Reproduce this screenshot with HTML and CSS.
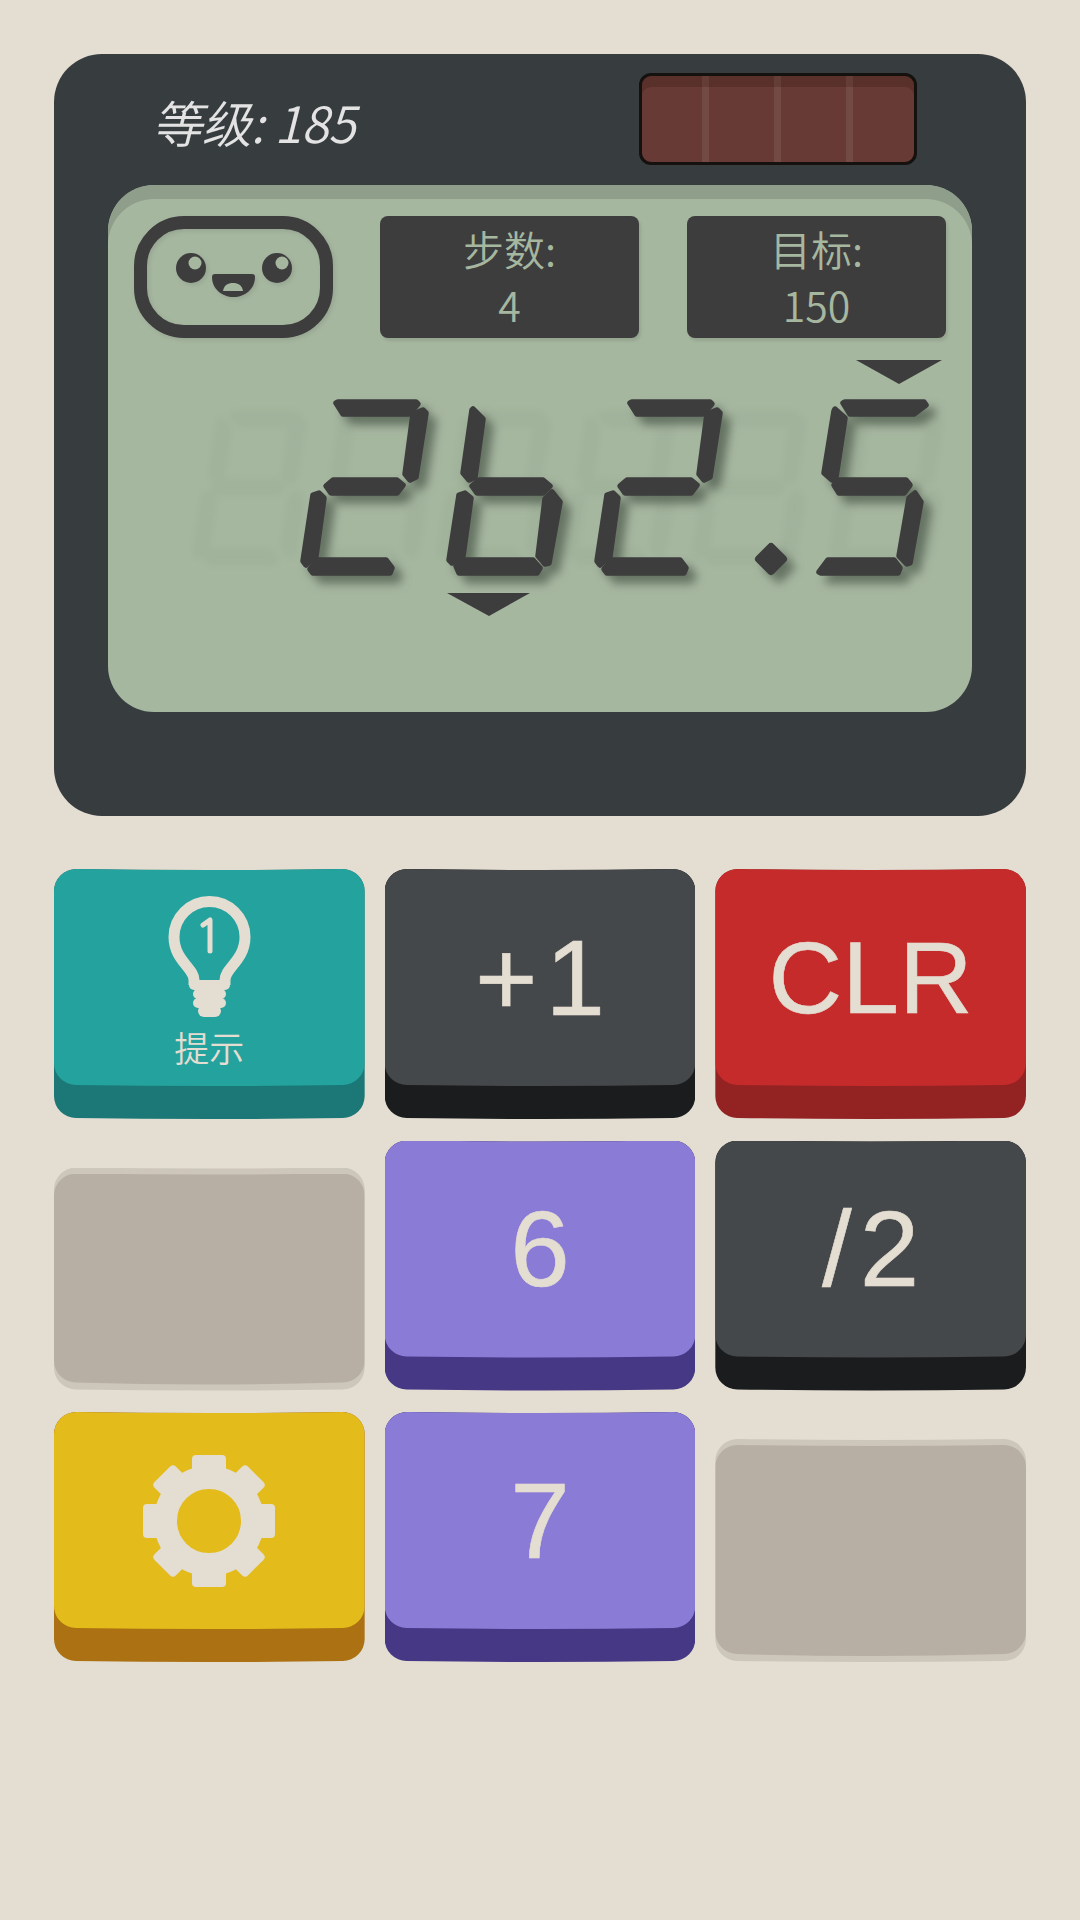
FILE: index.html
```html
<!DOCTYPE html>
<html lang="zh">
  <head>
    <meta charset="UTF-8" />
    <meta name="viewport" content="width=device-width, initial-scale=1.0" />
    <title>Calculator</title>

    <link rel="stylesheet" href="styles.css">
  </head>

  <body>
    <main class="page">
      <!-- calculator body -->
      <section class="panel">
        <div class="panel-top">
          <div class="level">等级: 185</div>
          <div class="solar"></div>
        </div>

        <div class="screen">
          <div class="screen-top">
            <svg class="face" viewBox="134 216 199 122" width="199" height="122">
              <rect class="face-outline" x="140.5" y="222.5" width="186" height="109" rx="43.5" />
              <circle class="ink" cx="191" cy="268" r="15" />
              <circle class="lcd" cx="195" cy="263" r="6.5" />
              <circle class="ink" cx="277" cy="268" r="15" />
              <circle class="lcd" cx="282" cy="263" r="6.5" />
              <path class="ink" d="M215 274 H252 Q255 274 255 277 C255 289 245 297 233.500 297 C222 297 212 289 212 277 Q212 274 215 274 Z" />
              <path class="lcd" d="M223 291 C224 285 228 283 233 283 C238 283 242 285 243 291 Z" />
            </svg>
            <div class="stat">
              <span>步数:</span>
              <span>4</span>
            </div>
            <div class="stat">
              <span>目标:</span>
              <span>150</span>
            </div>
          </div>

          <!-- segments are in page coordinates, easier to measure that way -->
          <svg class="display" viewBox="108 360 864 260" width="864" height="260" role="img" aria-label="262.5">
            <defs>
              <g id="ghost">
                <polygon points="18,-74 26,-78 94,-78 100,-73 88,-62 30,-62" />
                <polygon points="102,-70 106,-66 95,0 88,5 80,-3 88,-60" />
                <polygon points="97,11 105,24 94,87 88,89 79,79 87,20" />
                <polygon points="-10,87 -6,80 64,80 74,90 70,97 -5,97" />
                <polygon points="-4,12 3,19 -5,79 -17,90 -22,83 -12,16" />
                <polygon points="8,-72 20,-60 12,0 4,5 -4,-5 6,-70" />
                <polygon points="0,8 9,0 75,0 83,7 75,17 7,17" />
              </g>
              <g id="digit-two">
                <polygon points="336,403 338,402 416,402 418,404 409,414 343,414" />
                <polygon points="423,410 426,413 416,477 410,480 405,474 413,414" />
                <polygon points="326,486 333,480 397,480 403,485 397,493 331,493" />
                <polygon points="319,493 324,498 316,556 306,565 303,561 313,495" />
                <polygon points="310,569 318,560 386,560 392,568 390,573 313,573" />
              </g>
            </defs>

            <g class="ghosts">
              <use href="#ghost" transform="translate(213 480) scale(.87)" />
              <use href="#ghost" transform="translate(335 480) scale(.87)" />
              <use href="#ghost" transform="translate(458 480) scale(.87)" />
              <use href="#ghost" transform="translate(582 480) scale(.87)" />
              <use href="#ghost" transform="translate(713 480) scale(.87)" />
              <use href="#ghost" transform="translate(850 480) scale(.87)" />
            </g>

            <polygon class="ink" points="447,593 530,593 489,616" />
            <polygon class="ink" points="856,360 942,360 899,384" />

            <g class="segments">
              <use href="#digit-two" />
              <g>
                <polygon points="473,409 483,419 475,477 469,480 463,473 472,410" />
                <polygon points="472,486 479,480 543,480 550,486 543,493 477,493" />
                <polygon points="465,493 471,498 463,556 452,563 449,560 459,495" />
                <polygon points="552,492 560,502 549,563 545,564 538,556 545,499" />
                <polygon points="456,566 465,560 533,560 540,568 537,573 459,573" />
              </g>
              <use href="#digit-two" transform="translate(294 0)" />
              <polygon class="dot" points="771,547 783,559 771,571 759,559" />
              <g>
                <polygon points="843,403 845,402 924,402 926,405 914,414 850,414" />
                <polygon points="835,409 845,418 836,477 832,480 824,473 834,411" />
                <polygon points="834,485 839,480 906,480 910,485 904,493 839,493" />
                <polygon points="915,493 921,502 910,563 907,564 899,556 909,498" />
                <polygon points="819,572 828,560 894,560 900,568 898,573 821,573" />
              </g>
            </g>
          </svg>
        </div>
      </section>

      <!-- keypad -->
      <section class="keys">
        <button class="key key-teal">
          <span class="key-face key-hint">
            <svg class="bulb" viewBox="167 896 84 122" width="84" height="122">
              <path class="bulb-line" d="M194 985 V980 C194 968 174 960 174 937 A35.500 35.500 0 1 1 245 937 C245 960 225 968 225 980 V985" />
              <path class="bulb-num" d="M203 925 L210 920 V951" />
              <path class="bulb-base" d="M194 985 H225" />
              <path class="bulb-base" d="M198 994 H221" />
              <path class="bulb-base" d="M198 1003 H221" />
              <path class="bulb-end" d="M204 1011 H215" />
            </svg>
            <span class="hint-text">提示</span>
          </span>
        </button>
        <button class="key key-dark"><span class="key-face key-spaced">+1</span></button>
        <button class="key key-red"><span class="key-face key-clr">CLR</span></button>

        <div class="key-off"><span class="key-off-face"></span></div>
        <button class="key key-purple"><span class="key-face">6</span></button>
        <button class="key key-dark"><span class="key-face key-spaced">/2</span></button>

        <button class="key key-yellow">
          <span class="key-face">
            <svg class="gear" viewBox="-67 -67 134 134" width="134" height="134">
              <circle class="gear-ring" r="43.500" />
              <rect class="gear-tooth" x="-17" y="-66" width="34" height="30" rx="4" />
              <rect class="gear-tooth" x="-17" y="-66" width="34" height="30" rx="4" transform="rotate(90)" />
              <rect class="gear-tooth" x="-17" y="-66" width="34" height="30" rx="4" transform="rotate(180)" />
              <rect class="gear-tooth" x="-17" y="-66" width="34" height="30" rx="4" transform="rotate(270)" />
              <rect class="gear-tooth" x="-15" y="-66" width="30" height="30" rx="4" transform="rotate(45)" />
              <rect class="gear-tooth" x="-15" y="-66" width="30" height="30" rx="4" transform="rotate(135)" />
              <rect class="gear-tooth" x="-15" y="-66" width="30" height="30" rx="4" transform="rotate(225)" />
              <rect class="gear-tooth" x="-15" y="-66" width="30" height="30" rx="4" transform="rotate(315)" />
            </svg>
          </span>
        </button>
        <button class="key key-purple"><span class="key-face">7</span></button>
        <div class="key-off"><span class="key-off-face"></span></div>
      </section>
    </main>
  </body>
</html>
```

FILE: styles.css
```css
* {
  box-sizing: border-box;
  margin: 0;
  padding: 0;
}

body {
  width: 1080px;
  height: 1920px;
  background-color: #e4ddd1;
  font-family: "Liberation Sans", Arial, sans-serif;
  overflow: hidden;
}

.page {
  padding: 54px 54px 0;
}

/* calculator body */
.panel {
  height: 762px;
  padding: 19px 54px 0;
  background-color: #373c3f;
  border-radius: 48px;
}

.panel-top {
  display: flex;
  justify-content: space-between;
  height: 112px;
}

.level {
  padding: 13px 0 0 44px;
  color: #e3e3e3;
  font-family: "Noto Sans CJK SC", "Noto Sans", sans-serif;
  font-size: 50px;
  font-style: italic;
  font-weight: 350;
  letter-spacing: -0.6px;
  line-height: 70px;
}

.solar {
  width: 278px;
  height: 92px;
  margin-right: 55px;
  border: 3px solid #14110f;
  border-radius: 12px;
  background: repeating-linear-gradient(90deg, #673a35 0 60px, #734a44 60px 67px, #673a35 67px 72px);
  box-shadow: inset 0 11px 0 rgba(40, 10, 5, 0.2);
}

.screen {
  height: 527px;
  padding-top: 31px;
  background-color: #a6b7a0;
  border-radius: 46px;
  box-shadow: inset 0 14px 0 #8f9e8a;
}

.screen-top {
  display: flex;
  gap: 47px;
  padding: 0 26px;
}

.face {
  display: block;
  flex: none;
  filter: drop-shadow(2px 2px 2px rgba(60, 70, 60, 0.15));
}

.face-outline {
  fill: none;
  stroke: #3d3d3d;
  stroke-width: 13;
}

.ink {
  fill: #3d3d3d;
}

.lcd {
  fill: #a6b7a0;
}

.stat {
  display: flex;
  flex-direction: column;
  justify-content: center;
  align-items: center;
  width: 259px;
  height: 122px;
  padding-bottom: 2px;
  background-color: #3d3d3d;
  border-radius: 8px;
  box-shadow: 2px 3px 3px rgba(60, 70, 60, 0.15);
  color: #a6b7a0;
  font-family: "Noto Sans CJK SC", "Noto Sans", sans-serif;
  font-size: 41px;
  font-weight: 350;
  line-height: 56px;
}

.stat + .stat {
  margin-left: 1px;
}

.display {
  display: block;
  margin-top: 22px;
}

.ghosts {
  fill: #465a46;
  stroke: #465a46;
  stroke-width: 3;
  opacity: 0.045;
  filter: blur(3px);
}

.segments {
  fill: #3d3d3d;
  stroke: #3d3d3d;
  stroke-width: 5.500;
  stroke-linejoin: round;
  filter: drop-shadow(8px 8px 5px rgba(50, 60, 50, 0.55));
}

.dot {
  stroke-width: 8;
}

/* keypad */
.keys {
  display: grid;
  grid-template-columns: repeat(3, 310.670px);
  grid-auto-rows: 250px;
  gap: 21.500px 20px;
  margin-top: 53px;
}

.key {
  display: flex;
  align-items: flex-start;
  width: 100%;
  height: 250px;
  border: 0;
  background-color: var(--base);
  clip-path: path("M22 0 Q155 2 288.670 0 A22 22 0 0 1 310.670 22 V227 A22 22 0 0 1 288.670 249 Q155 251 22 249 A22 22 0 0 1 0 227 V22 A22 22 0 0 1 22 0 Z");
  font-family: inherit;
}

.key-face {
  display: flex;
  justify-content: center;
  align-items: center;
  width: 100%;
  height: 218px;
  background-color: var(--top);
  clip-path: path("M22 0 Q155 2 288.670 0 A22 22 0 0 1 310.670 22 V194 A22 22 0 0 1 288.670 216 Q155 218 22 216 A22 22 0 0 1 0 194 V22 A22 22 0 0 1 22 0 Z");
  color: #e4ddd1;
  font-size: 107px;
  line-height: 1;
  -webkit-text-stroke: 0.6px #e4ddd1;
}

.key-teal {
  --top: #23a29e;
  --base: #1b7876;
}

.key-dark {
  --top: #45484b;
  --base: #1a1c1e;
}

.key-red {
  --top: #c62b2b;
  --base: #932222;
}

.key-purple {
  --top: #8a7bd6;
  --base: #463885;
}

.key-yellow {
  --top: #e3bb1b;
  --base: #ab7113;
}

.key-clr {
  font-size: 102px;
}

.key-spaced {
  padding-left: 8px;
  letter-spacing: 8px;
}

.key-hint {
  flex-direction: column;
  justify-content: flex-start;
  padding-top: 27px;
}

.bulb {
  display: block;
}

.bulb-line,
.bulb-num,
.bulb-base,
.bulb-end {
  fill: none;
  stroke: #e4ddd1;
}

.bulb-line {
  stroke-width: 11;
}

.bulb-num {
  stroke-width: 5;
  stroke-linecap: round;
  stroke-linejoin: round;
}

.bulb-base {
  stroke-width: 10;
  stroke-linecap: round;
}

.bulb-end {
  stroke-width: 12;
  stroke-linecap: round;
}

.hint-text {
  margin-top: 9px;
  font-family: "Noto Sans CJK SC", "Noto Sans", sans-serif;
  font-size: 35px;
  font-weight: 350;
  line-height: 40px;
  -webkit-text-stroke: 0;
}

.gear {
  display: block;
}

.gear-ring {
  fill: none;
  stroke: #e4ddd1;
  stroke-width: 23;
}

.gear-tooth {
  fill: #e4ddd1;
}

/* keys that have been used up */
.key-off {
  align-self: end;
  height: 223px;
  padding-top: 6px;
  background-color: #cdc6ba;
  clip-path: path("M22 0 Q155 2 288.670 0 A22 22 0 0 1 310.670 22 V200 A22 22 0 0 1 288.670 222 Q155 224 22 222 A22 22 0 0 1 0 200 V22 A22 22 0 0 1 22 0 Z");
}

.key-off-face {
  display: block;
  height: 212px;
  background-color: #b7afa3;
  clip-path: path("M22 0 Q155 2 288.670 0 A22 22 0 0 1 310.670 22 V187 A22 22 0 0 1 288.670 209 Q155 213 22 209 A22 22 0 0 1 0 187 V22 A22 22 0 0 1 22 0 Z");
}
```
